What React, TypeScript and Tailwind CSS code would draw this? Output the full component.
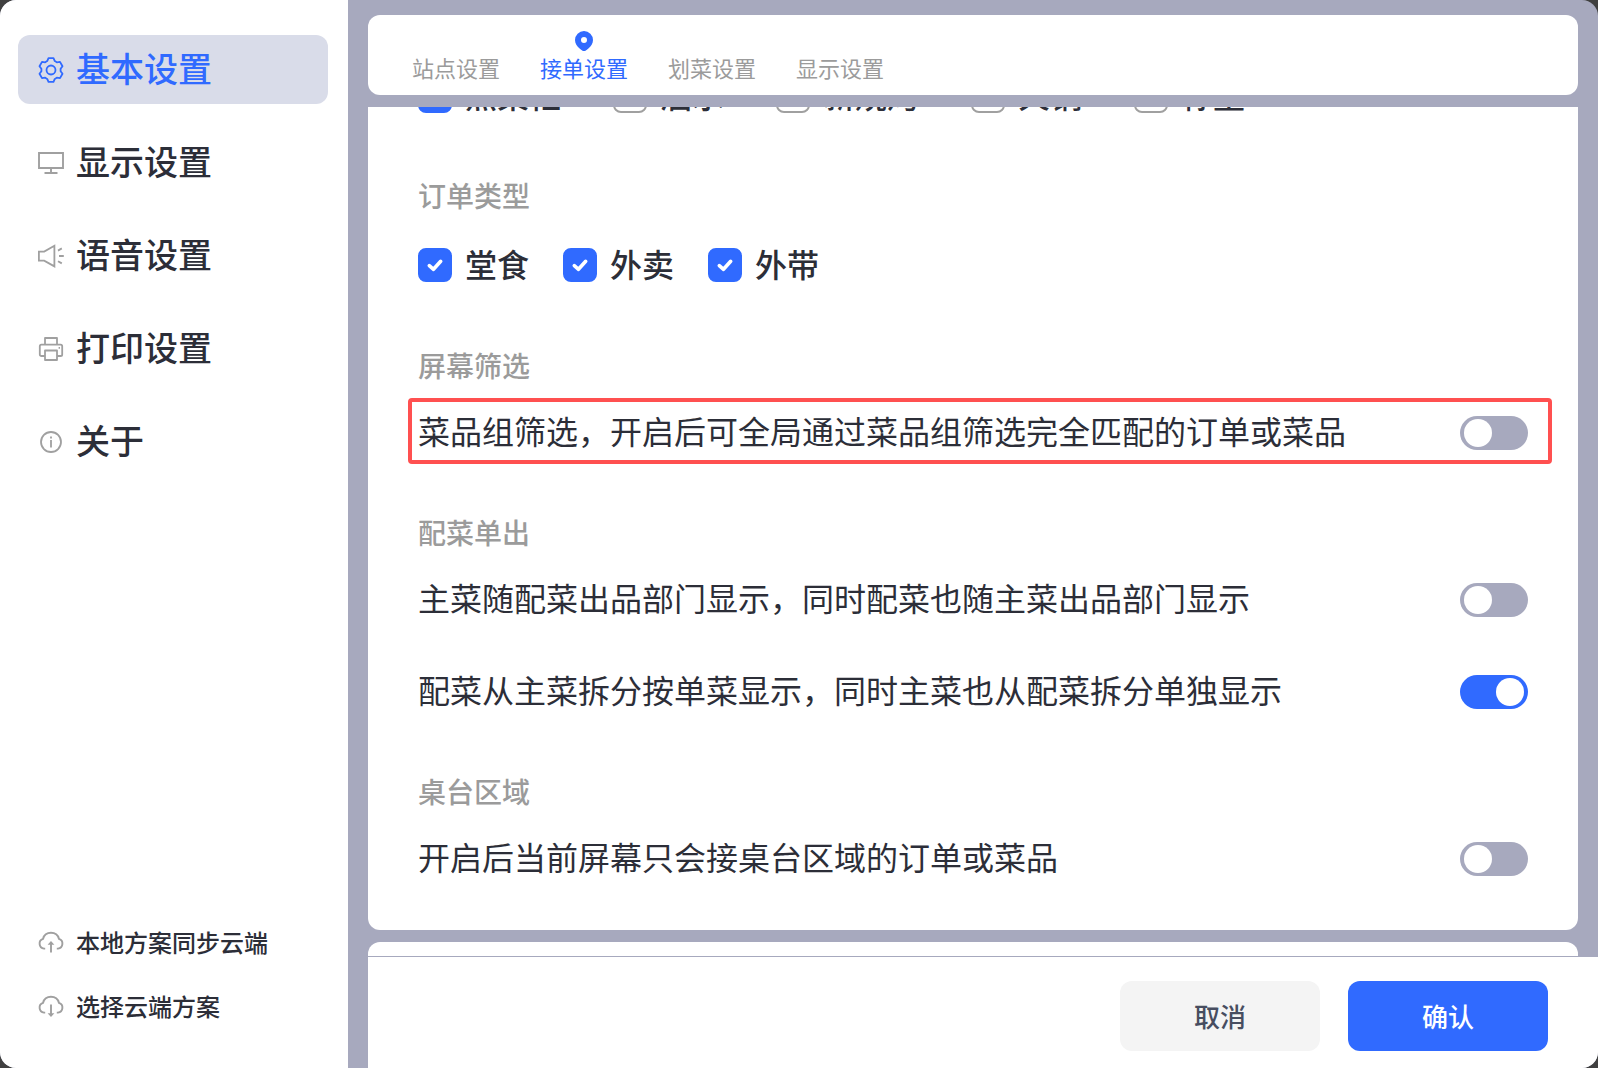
import { useState } from "react";
import type { ReactNode } from "react";

type IconProps = { className?: string };

function GearIcon({ className }: IconProps) {
  return (
    <svg
      viewBox="0 0 26 26"
      className={className}
      fill="none"
      stroke="currentColor"
      strokeWidth="1.8"
      strokeLinejoin="round"
      aria-hidden="true"
    >
      <path d="M10.5 1.2H15.500L16.800 4.100 18.800 5.300 22 4.900 24.500 9.300 22.600 11.800V14.200L24.500 16.700 22 21.100 18.800 20.700 16.800 21.900 15.500 24.800H10.500L9.200 21.900 7.200 20.700 4 21.100 1.500 16.700 3.400 14.200V11.800L1.500 9.300 4 4.900 7.200 5.300 9.200 4.100z" />
      <circle cx="13" cy="13" r="4.500" />
    </svg>
  );
}

function MonitorIcon({ className }: IconProps) {
  return (
    <svg viewBox="0 0 26 26" className={className} fill="none" stroke="currentColor" strokeWidth="1.9" aria-hidden="true">
      <path d="M1 3h24v15H1zM13 18v5M6.500 23h13" />
    </svg>
  );
}

function SpeakerIcon({ className }: IconProps) {
  return (
    <svg viewBox="0 0 26 26" className={className} fill="none" stroke="currentColor" strokeWidth="1.8" aria-hidden="true">
      <path d="M.9 8.600h5.300L16.400 2.800v20.600L6.200 17.600H.9zM21 13h4.800M20 7.600l3.800-2.200M20 18.200l3.800 2.200" />
    </svg>
  );
}

function PrinterIcon({ className }: IconProps) {
  return (
    <svg
      viewBox="0 0 26 26"
      className={className}
      fill="none"
      stroke="currentColor"
      strokeWidth="1.8"
      strokeLinejoin="round"
      aria-hidden="true"
    >
      <path d="M7 8.600V2h12v6.600M7 20H3.400a1.600 1.600 0 0 1-1.600-1.600v-8.200a1.600 1.600 0 0 1 1.600-1.600h19.200a1.600 1.600 0 0 1 1.600 1.600v8.200a1.600 1.600 0 0 1-1.600 1.600H19M7 14.500h12v9.500H7z" />
      <path d="M20.600 11.800h1.400" />
    </svg>
  );
}

function InfoIcon({ className }: IconProps) {
  return (
    <svg viewBox="0 0 26 26" className={className} fill="none" stroke="currentColor" strokeWidth="1.8" aria-hidden="true">
      <circle cx="13" cy="13" r="10" />
      <path d="M13 11v7.600M13 7.400v2" />
    </svg>
  );
}

function CloudIcon({ className, children }: IconProps & { children: ReactNode }) {
  return (
    <svg viewBox="0 0 26 26" className={className} fill="none" stroke="currentColor" strokeWidth="1.9" aria-hidden="true">
      <path d="M7.200 19.600H6A5 5 0 0 1 5 9.900a8.300 8.300 0 0 1 16 0 5 5 0 0 1-1 9.700h-1.200" />
      {children}
    </svg>
  );
}

function CloudUpIcon({ className }: IconProps) {
  return (
    <CloudIcon className={className}>
      <path d="M13 23.400V14" />
      <path d="M9.600 15.800L13 12l3.400 3.800z" fill="currentColor" stroke="none" />
    </CloudIcon>
  );
}

function CloudDownIcon({ className }: IconProps) {
  return (
    <CloudIcon className={className}>
      <path d="M13 11.600v10" />
      <path d="M9.600 20.200L13 24l3.400-3.800z" fill="currentColor" stroke="none" />
    </CloudIcon>
  );
}

function PinIcon({ className }: IconProps) {
  return (
    <svg viewBox="0 0 18 20" className={className} fill="currentColor" aria-hidden="true">
      <path
        fillRule="evenodd"
        d="M9 0a9 9 0 0 1 9 9c0 3.400-2 6.200-4.600 8.400-1 .9-2 1.700-3 2.300a2.500 2.500 0 0 1-2.800 0c-1-.6-2-1.400-3-2.300C2 15.200 0 12.400 0 9a9 9 0 0 1 9-9zm0 6a3 3 0 1 0 0 6 3 3 0 0 0 0-6z"
      />
    </svg>
  );
}

const navItems = [
  { label: "基本设置", Icon: GearIcon },
  { label: "显示设置", Icon: MonitorIcon },
  { label: "语音设置", Icon: SpeakerIcon },
  { label: "打印设置", Icon: PrinterIcon },
  { label: "关于", Icon: InfoIcon },
];

const cloudItems = [
  { label: "本地方案同步云端", Icon: CloudUpIcon },
  { label: "选择云端方案", Icon: CloudDownIcon },
];

const tabs = ["站点设置", "接单设置", "划菜设置", "显示设置"];

function Check({ label, initial }: { label: string; initial: boolean }) {
  const [on, setOn] = useState(initial);
  return (
    <label className="flex h-12 cursor-pointer items-center gap-[13px] text-[32px] leading-[44px] font-medium">
      <span className="grid size-[34px] shrink-0">
        <input
          type="checkbox"
          checked={on}
          onChange={() => setOn(!on)}
          className="col-start-1 row-start-1 size-full appearance-none rounded-lg border-2 border-[#a0a0a0] bg-white checked:border-[#306aff] checked:bg-[#306aff]"
        />
        {on && (
          <svg
            viewBox="0 0 34 34"
            className="pointer-events-none col-start-1 row-start-1 size-full text-white"
            fill="none"
            stroke="currentColor"
            strokeWidth="3.600"
            strokeLinecap="round"
            strokeLinejoin="round"
            aria-hidden="true"
          >
            <path d="M11.300 17.700l4.200 3.600 7.200-8" />
          </svg>
        )}
      </span>
      <span className="pb-1">{label}</span>
    </label>
  );
}

function ToggleRow({ label, initial = false, highlighted = false }: { label: string; initial?: boolean; highlighted?: boolean }) {
  const [on, setOn] = useState(initial);
  return (
    <label className="relative flex h-[66px] cursor-pointer items-center justify-between">
      {highlighted && (
        <span className="pointer-events-none absolute -top-0.5 -right-6 bottom-0.5 -left-2.5 rounded-sm border-4 border-[#ff5050]" />
      )}
      <span className="pb-1.5 text-[32px] leading-[48px]">{label}</span>
      <input
        type="checkbox"
        role="switch"
        checked={on}
        onChange={() => setOn(!on)}
        className="h-[34px] w-[68px] shrink-0 appearance-none rounded-full bg-[#a7a9be] px-1 py-[3px] before:block before:size-7 before:rounded-full before:bg-white checked:bg-[#306aff] checked:before:ml-8"
      />
    </label>
  );
}

function Section({ title, children }: { title: string; children: ReactNode }) {
  return (
    <section>
      <h2 className="text-[28px] leading-9 font-medium text-[#9b9b9b]">{title}</h2>
      {children}
    </section>
  );
}

export default function App() {
  const [nav, setNav] = useState(0);
  const [tab, setTab] = useState(1);
  return (
    <div className="h-screen bg-[#404040] font-['Noto_Sans_CJK_SC',sans-serif] text-[#2c2e38]">
      <div className="flex h-full overflow-hidden rounded-2xl bg-[#a7a9be]">
        <aside className="flex w-[348px] shrink-0 flex-col justify-between bg-white pt-[35px] pr-5 pb-[30px] pl-[18px]">
          <nav className="flex flex-col gap-6">
            {navItems.map(({ label, Icon }, i) => (
              <button
                key={label}
                type="button"
                onClick={() => setNav(i)}
                className={
                  i === nav
                    ? "flex h-[69px] items-center gap-3 rounded-xl bg-[#d9dce9] px-5 text-[34px] leading-[48px] font-medium text-[#306aff]"
                    : "flex h-[69px] items-center gap-3 rounded-xl px-5 text-[34px] leading-[48px] font-medium"
                }
              >
                <Icon className={i === nav ? "size-[26px]" : "size-[26px] text-[#a0a0a0]"} />
                <span className="pb-1">{label}</span>
              </button>
            ))}
          </nav>
          <div className="flex flex-col">
            {cloudItems.map(({ label, Icon }) => (
              <button key={label} type="button" className="flex h-16 items-center gap-3 px-5 text-2xl font-medium">
                <Icon className="size-[26px] text-[#a0a0a0]" />
                {label}
              </button>
            ))}
          </div>
        </aside>

        <main className="flex min-w-0 flex-1 flex-col pl-5">
          <div className="flex min-h-0 flex-1 flex-col gap-3 overflow-hidden pt-[15px] pr-5">
            <header className="flex h-20 shrink-0 gap-10 rounded-xl bg-white px-11">
              {tabs.map((label, i) => (
                <button
                  key={label}
                  type="button"
                  onClick={() => setTab(i)}
                  className={
                    i === tab
                      ? "flex flex-col items-center justify-end pb-3 text-[22px] leading-8 text-[#306aff]"
                      : "flex flex-col items-center justify-end pb-3 text-[22px] leading-8 text-[#9b9b9b]"
                  }
                >
                  {i === tab && <PinIcon className="h-5 w-[18px]" />}
                  {label}
                </button>
              ))}
            </header>

            <div className="flex h-[823px] shrink-0 flex-col justify-end overflow-hidden rounded-b-xl bg-white px-[50px] pb-[38px]">
              <div className="flex gap-[52px]">
                <Check label="点菜柜" initial={true} />
                <Check label="酒水" initial={false} />
                <Check label="新烧烤" initial={false} />
                <Check label="火锅" initial={false} />
                <Check label="称重" initial={false} />
              </div>
              <div className="mt-[57px] flex flex-col gap-12">
                <Section title="订单类型">
                  <div className="mt-7 mb-2.5 flex gap-[34px]">
                    <Check label="堂食" initial={true} />
                    <Check label="外卖" initial={true} />
                    <Check label="外带" initial={true} />
                  </div>
                </Section>
                <Section title="屏幕筛选">
                  <div className="mt-[17px]">
                    <ToggleRow label="菜品组筛选，开启后可全局通过菜品组筛选完全匹配的订单或菜品" highlighted />
                  </div>
                </Section>
                <Section title="配菜单出">
                  <div className="mt-[17px] flex flex-col gap-[26px]">
                    <ToggleRow label="主菜随配菜出品部门显示，同时配菜也随主菜出品部门显示" />
                    <ToggleRow label="配菜从主菜拆分按单菜显示，同时主菜也从配菜拆分单独显示" initial />
                  </div>
                </Section>
                <Section title="桌台区域">
                  <div className="mt-[17px]">
                    <ToggleRow label="开启后当前屏幕只会接桌台区域的订单或菜品" />
                  </div>
                </Section>
              </div>
            </div>

            <div className="h-40 shrink-0 rounded-t-xl bg-white" />
          </div>

          <footer className="flex shrink-0 justify-end gap-7 border-t border-[#a7a9be] bg-white pt-6 pr-[50px] pb-[17px]">
            <button type="button" className="h-[70px] w-[200px] rounded-xl bg-[#f4f4f4] pb-0.5 text-[26px] font-medium text-[#474d60]">
              取消
            </button>
            <button type="button" className="h-[70px] w-[200px] rounded-xl bg-[#306aff] pb-0.5 text-[26px] font-medium text-white">
              确认
            </button>
          </footer>
        </main>
      </div>
    </div>
  );
}
